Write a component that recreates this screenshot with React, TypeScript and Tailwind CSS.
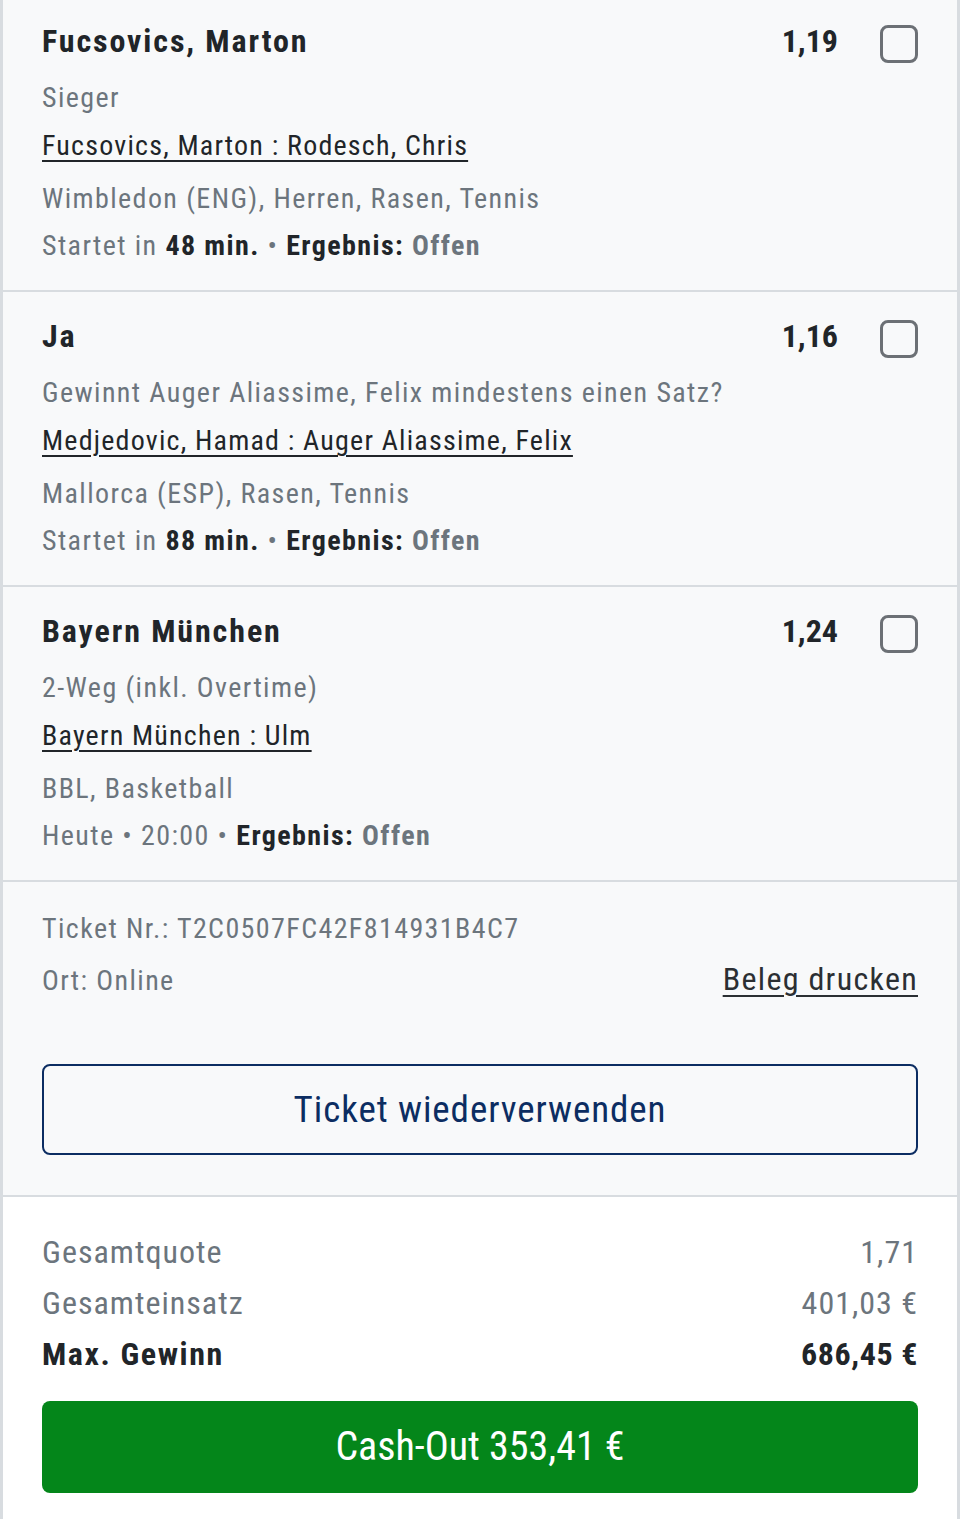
type Bet = {
  pick: string
  odds: string
  market: string
  match: string
  league: string
  meta: React.ReactNode
}

function Checkbox() {
  return <div className="mt-[4px] h-[38px] w-[38px] shrink-0 rounded-[8px] border-[3px] border-[#6c7075]" />
}

function StartsIn({ mins }: { mins: number }) {
  return (
    <>
      Startet in <span className="font-bold text-[#212529]">{mins} min.</span> •{" "}
      <span className="font-bold text-[#212529]">Ergebnis:</span> <span className="font-bold">Offen</span>
    </>
  )
}

const bets: Bet[] = [
  {
    pick: "Fucsovics, Marton",
    odds: "1,19",
    market: "Sieger",
    match: "Fucsovics, Marton : Rodesch, Chris",
    league: "Wimbledon (ENG), Herren, Rasen, Tennis",
    meta: <StartsIn mins={48} />,
  },
  {
    pick: "Ja",
    odds: "1,16",
    market: "Gewinnt Auger Aliassime, Felix mindestens einen Satz?",
    match: "Medjedovic, Hamad : Auger Aliassime, Felix",
    league: "Mallorca (ESP), Rasen, Tennis",
    meta: <StartsIn mins={88} />,
  },
  {
    pick: "Bayern München",
    odds: "1,24",
    market: "2-Weg (inkl. Overtime)",
    match: "Bayern München : Ulm",
    league: "BBL, Basketball",
    meta: (
      <>
        Heute • 20:00 • <span className="font-bold text-[#212529]">Ergebnis:</span>{" "}
        <span className="font-bold">Offen</span>
      </>
    ),
  },
]

function BetRow({ bet, first }: { bet: Bet; first: boolean }) {
  return (
    <div className={first ? "px-[39px] pt-[21px] pb-[26px]" : "border-t-2 border-[#d8dce0] px-[39px] pt-[24px] pb-[26px]"}>
      <div className="flex h-[40px] items-start">
        <div className="flex-1 text-[32px] leading-[40px] font-bold tracking-[1.9px] text-[#212529]">{bet.pick}</div>
        <div className="text-[32px] leading-[40px] font-bold text-[#212529]">{bet.odds}</div>
        <div className="ml-[42px]">
          <Checkbox />
        </div>
      </div>
      <div className="mt-[19px] text-[28px] leading-[36px] tracking-wider text-[#6c757d]">{bet.market}</div>
      <div className="mt-[12px] text-[28px] leading-[36px] tracking-[1.2px] text-[#212529] underline decoration-2 underline-offset-[5px]">
        {bet.match}
      </div>
      <div className="mt-[17px] text-[28px] leading-[36px] tracking-wider text-[#6c757d]">{bet.league}</div>
      <div className="mt-[11px] text-[28px] leading-[36px] tracking-wider text-[#6c757d]">{bet.meta}</div>
    </div>
  )
}

export default function App() {
  return (
    <div className="min-h-screen bg-white font-['Roboto_Condensed',Roboto,sans-serif]">
      <div className="border-x-[3px] border-[#d8dce0]">
        <div className="bg-[#f8f9fa]">
          {bets.map((bet, i) => (
            <BetRow key={bet.match} bet={bet} first={i === 0} />
          ))}

          {/* ticket info */}
          <div className="border-t-2 border-[#d8dce0] px-[39px] pt-[29px] pb-[40px]">
            <div className="text-[28px] leading-[36px] tracking-wider text-[#6c757d]">Ticket Nr.: T2C0507FC42F814931B4C7</div>
            <div className="mt-[14px] flex items-baseline justify-between">
              <div className="text-[28px] leading-[36px] tracking-wider text-[#6c757d]">Ort: Online</div>
              <a className="text-[32px] leading-[36px] tracking-[1.3px] text-[#2b2f33] underline decoration-2 underline-offset-[5px]">
                Beleg drucken
              </a>
            </div>
            <button className="mt-[65px] flex h-[91px] w-full items-center justify-center rounded-[8px] border-2 border-[#0c2d62] text-[37px] tracking-wide text-[#0c2d62]">
              Ticket wiederverwenden
            </button>
          </div>
        </div>

        {/* summary */}
        <div className="border-t-2 border-[#d8dce0] bg-white px-[39px] pt-[30px] pb-[26px]">
          <div className="flex justify-between text-[32px] leading-[51px] tracking-[1px] text-[#6c757d]">
            <span>Gesamtquote</span>
            <span>1,71</span>
          </div>
          <div className="flex justify-between text-[32px] leading-[51px] tracking-[1px] text-[#6c757d]">
            <span>Gesamteinsatz</span>
            <span>401,03 €</span>
          </div>
          <div className="flex justify-between text-[32px] leading-[51px] font-bold text-[#212529]">
            <span className="tracking-wider">Max. Gewinn</span>
            <span className="tracking-[0.6px]">686,45 €</span>
          </div>
          <button className="mt-[21px] flex h-[92px] w-full items-center justify-center rounded-[8px] bg-[#04861a] text-[40px] text-white">
            Cash-Out 353,41 €
          </button>
        </div>
      </div>
    </div>
  )
}
